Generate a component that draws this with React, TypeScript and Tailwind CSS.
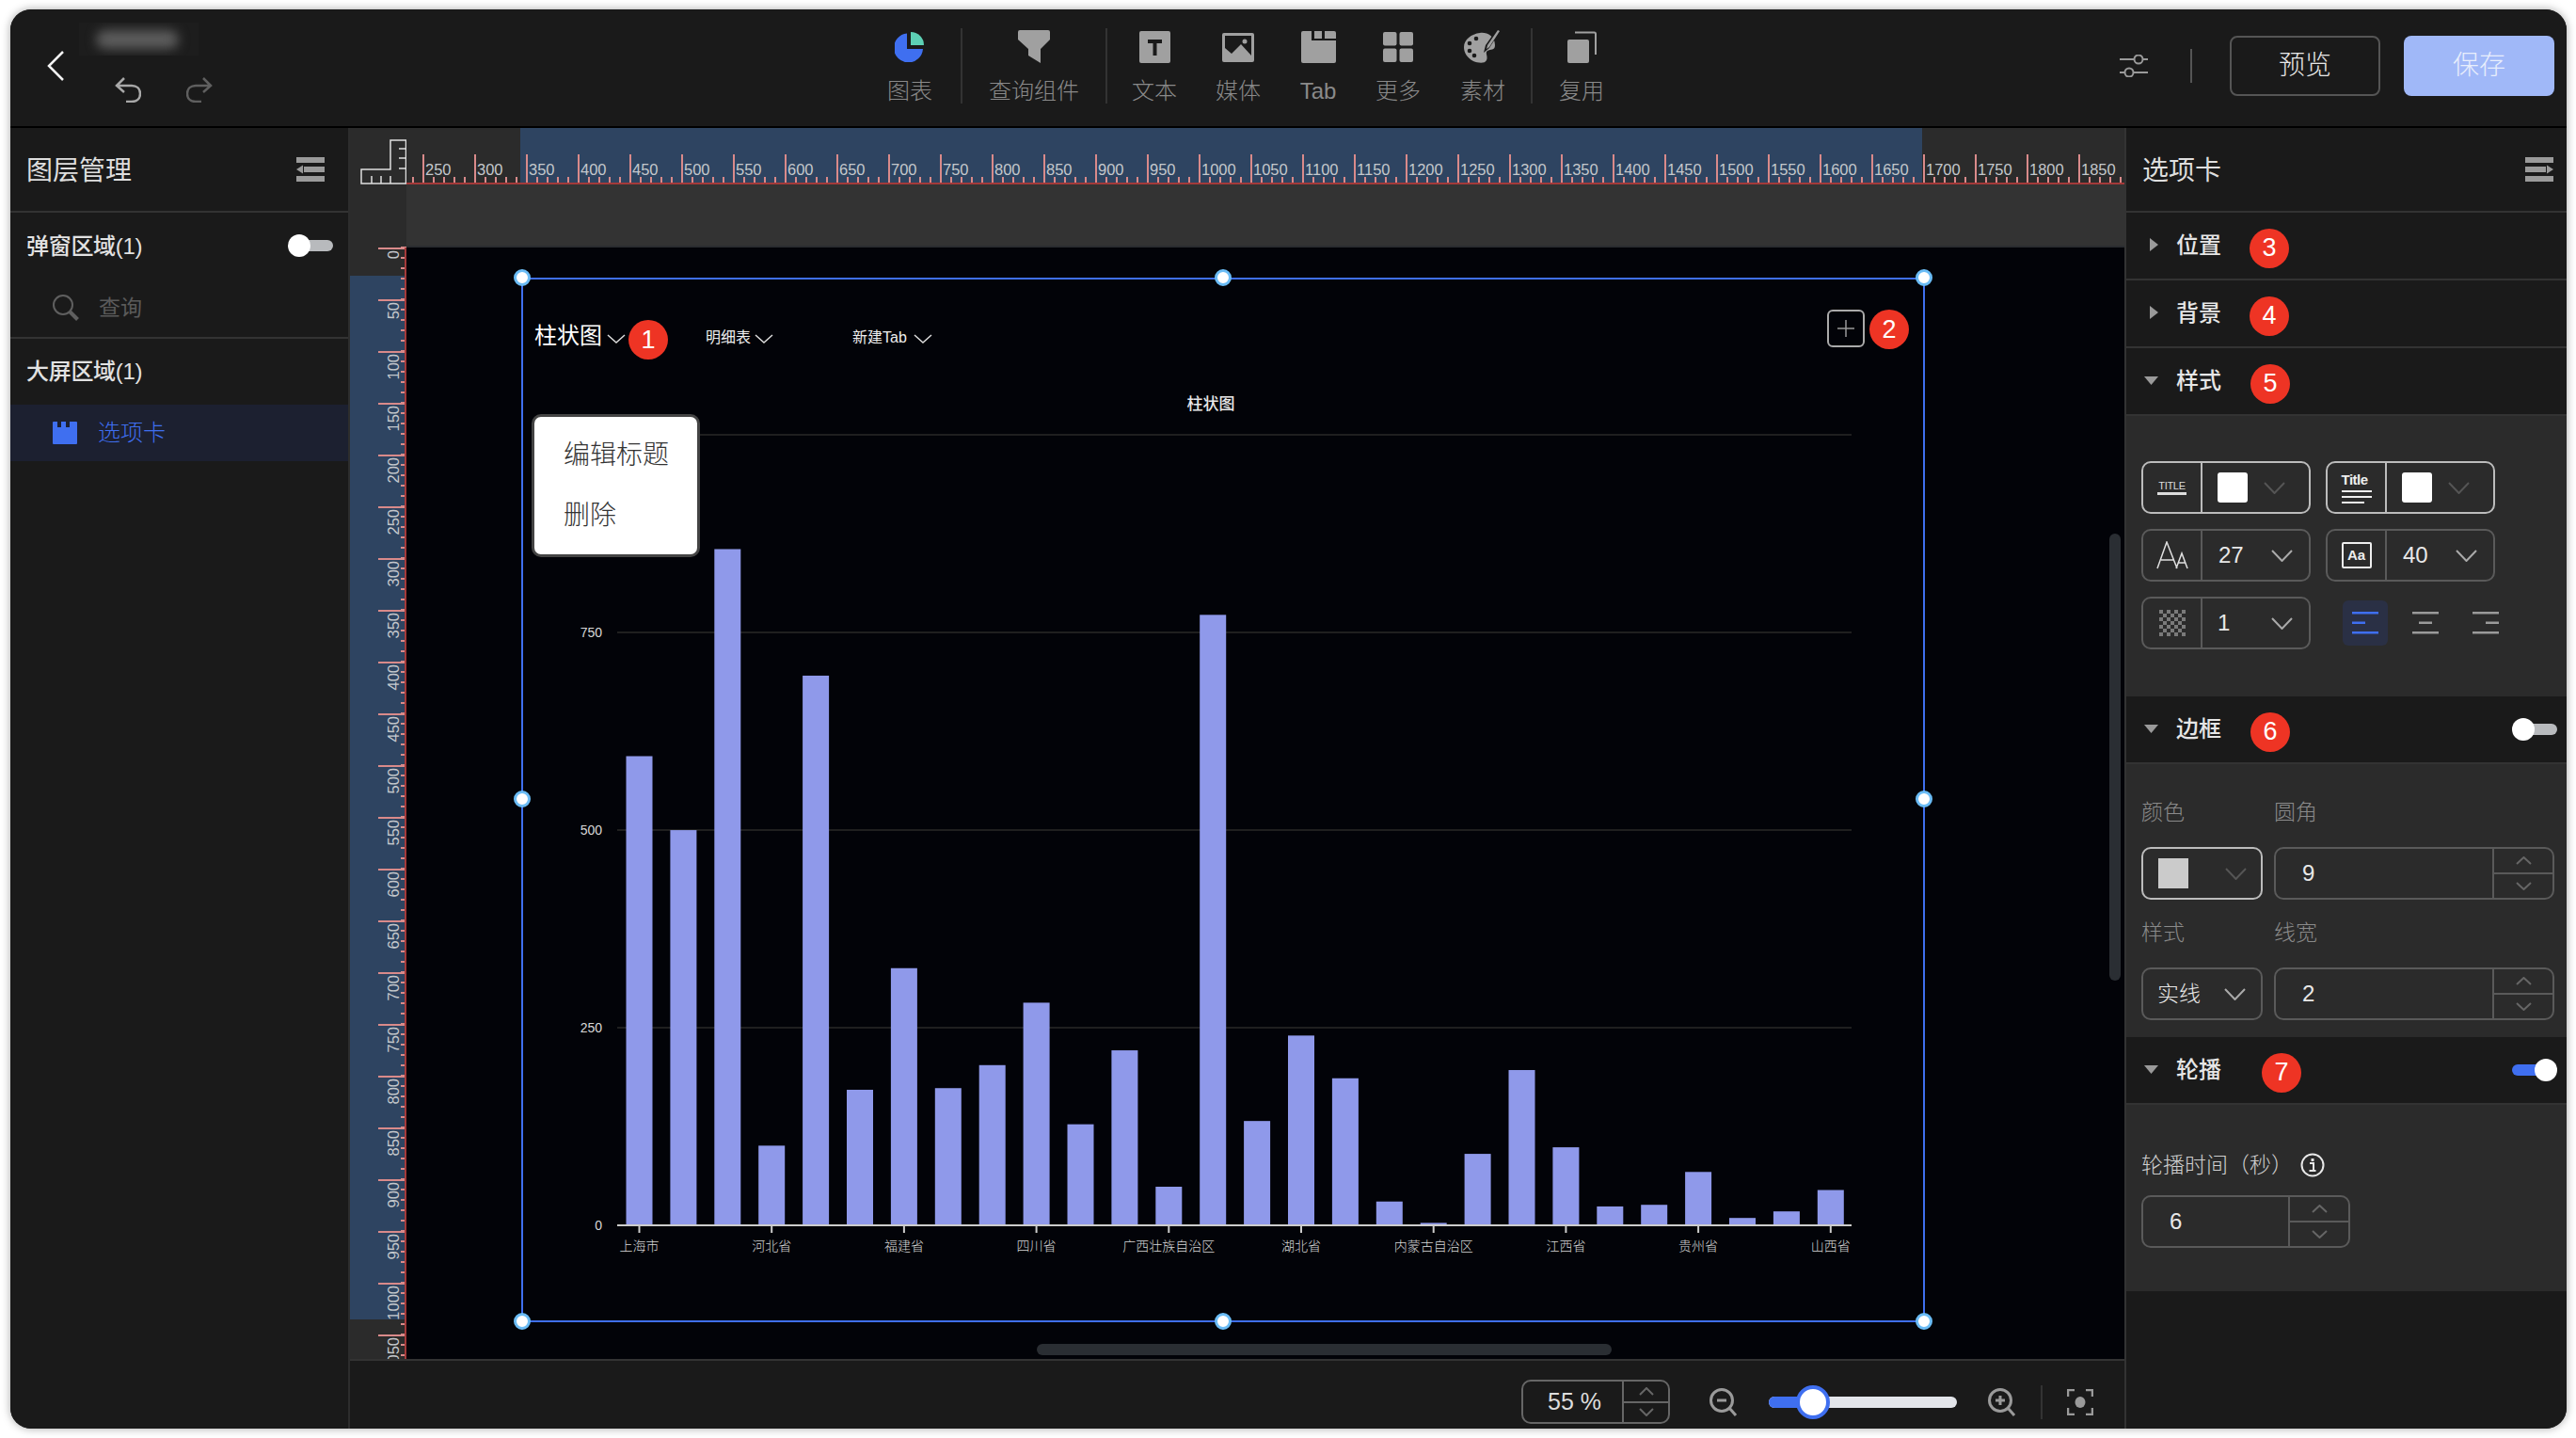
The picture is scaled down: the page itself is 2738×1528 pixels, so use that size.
import React from "react";

const FONT = "font-['Liberation_Sans','Noto_Sans_CJK_SC',sans-serif]";

function Chevron({ w = 22, h = 12, color = "#aaa", up = false, sw = 2 }: { w?: number; h?: number; color?: string; up?: boolean; sw?: number }) {
  return (
    <svg width={w} height={h} viewBox={`0 0 ${w} ${h}`} fill="none" className="block shrink-0">
      <path d={up ? `M1 ${h - 1}L${w / 2} 1L${w - 1} ${h - 1}` : `M1 1L${w / 2} ${h - 1}L${w - 1} 1`} stroke={color} strokeWidth={sw} />
    </svg>
  );
}

function Badge({ n, className = "" }: { n: number; className?: string }) {
  return (
    <div className={`w-[42px] h-[42px] rounded-full bg-[#ee3424] text-white text-[27px] font-medium flex items-center justify-center shrink-0 ${className}`}>{n}</div>
  );
}

function Toggle({ on = false }: { on?: boolean }) {
  return (
    <div className="relative w-[48px] h-[24px] shrink-0">
      <div className={`absolute top-[6px] h-[12px] w-[36px] rounded-full ${on ? "left-0 bg-[#3f6ff0]" : "right-0 bg-[#b8babd]"}`} />
      <div className={`absolute top-0 w-[24px] h-[24px] rounded-full bg-white ${on ? "right-0" : "left-0"}`} />
    </div>
  );
}

function PanelIcon({ flip = false }: { flip?: boolean }) {
  return (
    <svg width="30" height="26" viewBox="0 0 30 26" className={`block shrink-0 ${flip ? "-scale-x-100" : ""}`} fill="#9a9a9a">
      <rect x="0" y="0" width="30" height="6" />
      <rect x="8" y="10" width="22" height="6" />
      <path d="M0 13L7 8.500V17.500Z" />
      <rect x="0" y="20" width="30" height="6" />
    </svg>
  );
}

function Tool({ label, w, children }: { label: string; w: string; children: React.ReactNode }) {
  return (
    <div className={`flex flex-col items-center ${w}`}>
      <div className="h-[36px] flex items-center justify-center pt-[4px]">{children}</div>
      <div className="mt-[17px] text-[24px] leading-[28px] font-light text-[#8a8a8a]">{label}</div>
    </div>
  );
}

function Sep() {
  return <div className="w-[2px] h-[80px] bg-[#333] shrink-0" />;
}

function TopBar() {
  return (
    <div className="h-[124px] shrink-0 flex items-start bg-[#1a1a1a]">
      <div className="w-[902px] shrink-0 flex items-start">
        <div className="pl-[39px] pt-[44px]">
          <svg width="18" height="32" viewBox="0 0 18 32" fill="none" className="block">
            <path d="M17 1L2 16L17 31" stroke="#f2f2f2" strokeWidth="2.500" />
          </svg>
        </div>
        <div className="ml-[16px] pt-[14px]">
          <div className="relative w-[127px] h-[35px] overflow-hidden bg-[#1d1d1d]">
            <div className="absolute left-[18px] top-[8px] w-[88px] h-[20px] rounded-full bg-[#5c5c5c] blur-[6px]" />
          </div>
          <div className="flex pl-[38px] mt-[23px] gap-[48px]">
            <svg width="28" height="27" viewBox="0 0 28 27" fill="none" className="block">
              <path d="M10 1L2 9L10 16M2 9H18C23 9 27 12 27 17.500C27 23 23 26 18 26H12" stroke="#a8a8a8" strokeWidth="2.500" />
            </svg>
            <svg width="28" height="27" viewBox="0 0 28 27" fill="none" className="block">
              <path d="M18 1L26 9L18 16M26 9H10C5 9 1 12 1 17.500C1 23 5 26 10 26H16" stroke="#5f5f5f" strokeWidth="2.500" />
            </svg>
          </div>
        </div>
      </div>
      <div className="flex items-start pt-[20px]">
        <Tool label="图表" w="w-[108px]">
          <svg width="32" height="32" viewBox="0 0 32 32" className="block">
            <path d="M13 1.500V18H30A15.500 15.500 0 1 1 13 1.500Z" fill="#3f6ff0" />
            <path d="M17 0A14 14 0 0 1 31 14H17Z" fill="#5dd0b5" />
          </svg>
        </Tool>
        <Sep />
        <Tool label="查询组件" w="w-[152px]">
          <svg width="34" height="36" viewBox="0 0 34 36" className="block">
            <path d="M2 0H32Q34 0 34 2V10L24 20V35L11 27V20L0 10V2Q0 0 2 0Z" fill="#a0a0a0" />
          </svg>
        </Tool>
        <Sep />
        <Tool label="文本" w="w-[100px]">
          <svg width="33" height="34" viewBox="0 0 33 34" className="block">
            <rect width="33" height="34" rx="2" fill="#a0a0a0" />
            <path d="M9 9H24V13H18.500V26H14.500V13H9Z" fill="#1a1a1a" />
          </svg>
        </Tool>
        <Tool label="媒体" w="w-[78px]">
          <svg width="34" height="31" viewBox="0 0 34 31" className="block">
            <rect width="34" height="31" rx="2" fill="#a0a0a0" />
            <rect x="3" y="3" width="28" height="25" fill="#1a1a1a" />
            <path d="M3 28V16L10 22L20 12L31 24V28Z" fill="#a0a0a0" />
            <circle cx="24" cy="9" r="2.500" fill="#a0a0a0" />
          </svg>
        </Tool>
        <Tool label="Tab" w="w-[92px]">
          <svg width="37" height="34" viewBox="0 0 37 34" className="block">
            <path d="M2 0H35Q37 0 37 2V32Q37 34 35 34H2Q0 34 0 32V2Q0 0 2 0Z" fill="#a0a0a0" />
            <rect x="11" y="0" width="3" height="10" fill="#1a1a1a" />
            <rect x="22" y="0" width="3" height="10" fill="#1a1a1a" />
            <rect x="14" y="8" width="8" height="2" fill="#1a1a1a" />
            <rect x="25" y="8" width="12" height="2" fill="#1a1a1a" />
          </svg>
        </Tool>
        <Tool label="更多" w="w-[78px]">
          <svg width="32" height="32" viewBox="0 0 32 32" fill="#a0a0a0" className="block">
            <rect width="14.500" height="14.500" rx="2" />
            <rect x="17.500" width="14.500" height="14.500" rx="2" />
            <rect y="17.500" width="14.500" height="14.500" rx="2" />
            <rect x="17.500" y="17.500" width="14.500" height="14.500" rx="2" />
          </svg>
        </Tool>
        <Tool label="素材" w="w-[102px]">
          <svg width="40" height="36" viewBox="0 0 40 36" className="block">
            <path d="M17 3C24 2 33 6 33 16C33 22 28 20 25 22C22 24 26 28 24 32C22 36 15 35 10 33C3 29 0 24 0 18C0 10 8 4 17 3Z" fill="#a0a0a0" />
            <circle cx="13" cy="9" r="2.300" fill="#1a1a1a" />
            <circle cx="6" cy="14" r="2.300" fill="#1a1a1a" />
            <circle cx="6" cy="22" r="2.300" fill="#1a1a1a" />
            <circle cx="11" cy="27" r="2.300" fill="#1a1a1a" />
            <path d="M39 0L27 19L21 24L23 16L35 -1Z" fill="#1a1a1a" />
            <path d="M38 1L27 18L24 20L25 16L36 0Z" fill="#a0a0a0" />
          </svg>
        </Tool>
        <Sep />
        <Tool label="复用" w="w-[104px]">
          <svg width="31" height="34" viewBox="0 0 31 34" className="block">
            <rect x="0" y="9" width="23" height="25" rx="2" fill="#a0a0a0" />
            <path d="M8 1.500H28.500Q30 1.500 30 3V25" fill="none" stroke="#a0a0a0" strokeWidth="2" />
          </svg>
        </Tool>
      </div>
      <div className="ml-auto flex items-center pt-[28px] pr-[13px]">
        <svg width="30" height="24" viewBox="0 0 30 24" fill="none" stroke="#9a9a9a" strokeWidth="2" className="block">
          <path d="M0 5H15M25 5H30M0 19H5M15 19H30" />
          <circle cx="20" cy="5" r="4.500" />
          <circle cx="10" cy="19" r="4.500" />
        </svg>
        <div className="ml-[45px] w-[2px] h-[36px] bg-[#555]" />
        <div className="ml-[40px] w-[160px] h-[64px] rounded-[8px] border-2 border-[#555] flex items-center justify-center text-[28px] text-[#e8e8e8] font-light">预览</div>
        <div className="ml-[25px] w-[160px] h-[64px] rounded-[8px] bg-[#a0b8f8] flex items-center justify-center text-[28px] text-[#e8eefc] font-light">保存</div>
      </div>
    </div>
  );
}

function LeftPanel() {
  return (
    <div className="w-[361px] shrink-0 border-r-2 border-[#2d2d2d] bg-[#1a1a1a] flex flex-col">
      <div className="h-[90px] border-b-2 border-[#333] flex items-center pl-[17px] pr-[25px] justify-between">
        <span className="text-[28px] text-[#dedede] pt-[3px]">图层管理</span>
        <PanelIcon />
      </div>
      <div className="h-[70px] flex items-center pl-[17px] pr-[16px] justify-between">
        <span className="text-[24px] text-[#e2e2e2] font-medium tracking-[-0.3px] pt-[1px]">弹窗区域(1)</span>
        <Toggle />
      </div>
      <div className="h-[64px] border-b-2 border-[#333] flex items-center pl-[45px]">
        <svg width="28" height="28" viewBox="0 0 28 28" fill="none" className="block">
          <circle cx="11" cy="11" r="10" stroke="#5f5f5f" strokeWidth="2" />
          <path d="M18 18L26.500 26.500" stroke="#5f5f5f" strokeWidth="4" />
        </svg>
        <span className="ml-[21px] text-[23px] text-[#5a5a5a] pt-[1px]">查询</span>
      </div>
      <div className="h-[70px] flex items-center pl-[17px]">
        <span className="text-[24px] text-[#e2e2e2] font-medium tracking-[-0.3px]">大屏区域(1)</span>
      </div>
      <div className="h-[60px] bg-[#1c2030] flex items-center pl-[45px]">
        <svg width="26" height="24" viewBox="0 0 26 24" className="block">
          <path d="M0 1Q0 0 1 0H5V6H9V0H14V6H18V0H25Q26 0 26 1V23Q26 24 25 24H1Q0 24 0 23Z" fill="#3f6ff0" />
        </svg>
        <span className="ml-[22px] text-[24px] text-[#3f6ff0] font-light">选项卡</span>
      </div>
    </div>
  );
}

const H_MAJOR = Array.from({ length: 33 }, (_, i) => ({ x: 18 + i * 55, v: 250 + i * 50 }));
const H_MINOR = Array.from({ length: 166 }, (_, i) => 7 + i * 11);
const V_MAJOR = Array.from({ length: 23 }, (_, i) => ({ y: 67 + i * 55, v: i * 50 }));
const V_MINOR = Array.from({ length: 108 }, (_, i) => 67 + i * 11);

function TopRuler() {
  return (
    <svg width="1826" height="60" viewBox="0 0 1826 60" className="block">
      <rect width="1826" height="60" fill="#2b2b2b" />
      <rect x="121" width="1490" height="60" fill="#2e4461" />
      {H_MINOR.map((x) => (
        <rect key={x} x={x - 1} y="52" width="2" height="6" fill="#d98a8a" />
      ))}
      {H_MAJOR.map((t) => (
        <g key={t.v}>
          <rect x={t.x - 1} y="28" width="2" height="30" fill="#d98a8a" />
          <text x={t.x + 2} y="50" fontSize="16.500" fontWeight="300" fill="#c4c8cc">{t.v}</text>
        </g>
      ))}
      <rect y="58" width="1826" height="2" fill="#a33a3a" />
    </svg>
  );
}

function LeftRuler() {
  return (
    <svg width="60" height="1248" viewBox="0 0 60 1248" className="block shrink-0">
      <rect width="60" height="1248" fill="#2b2b2b" />
      <rect y="97" width="58" height="1109" fill="#2e4461" />
      {V_MINOR.map((y) => (
        <rect key={y} x="54" y={y - 1} width="6" height="2" fill="#d98a8a" />
      ))}
      {V_MAJOR.map((t) => (
        <g key={t.v}>
          <rect x="30" y={t.y} width="30" height="2" fill="#d98a8a" />
          <text x="52" y={t.y + 3} fontSize="16.500" fontWeight="300" fill="#c4c8cc" textAnchor="end" transform={`rotate(-90 52 ${t.y + 3})`}>{t.v}</text>
        </g>
      ))}
      <rect x="58" y="67" width="2" height="1181" fill="#a33a3a" />
    </svg>
  );
}

const TOPS = [461, 506, 335, 698, 412, 664, 590, 663, 649, 611, 685, 640, 723, 375, 683, 631, 657, 732, 745, 703, 652, 699, 735, 734, 714, 742, 738, 725];
const LABELS = [
  [0, "上海市"], [3, "河北省"], [6, "福建省"], [9, "四川省"], [12, "广西壮族自治区"],
  [15, "湖北省"], [18, "内蒙古自治区"], [21, "江西省"], [24, "贵州省"], [27, "山西省"],
] as const;

function Chart() {
  const axis = 916;
  return (
    <svg width="1488" height="1018" viewBox="0 0 1488 1018" className="block">
      <text x="731" y="50" textAnchor="middle" fontSize="17" fontWeight="500" fill="#e8e8e8">柱状图</text>
      {[76, 286, 496, 706].map((y) => (
        <rect key={y} x="100" y={y} width="1312" height="2" fill="#1f1f1f" />
      ))}
      {[["750", 292], ["500", 502], ["250", 712], ["0", 922]].map(([t, y]) => (
        <text key={t} x="84" y={y} textAnchor="end" fontSize="14" fill="#d8d8d8">{t}</text>
      ))}
      {TOPS.map((t, i) => {
        const top = t * 1.7462 - 386.5;
        return <rect key={i} x={109.500 + i * 46.9} y={top} width="28" height={Math.max(axis - top, 0)} fill="#8f99ea" />;
      })}
      <rect x="100" y={axis} width="1312" height="2" fill="#cccccc" />
      {LABELS.map(([i, s]) => (
        <g key={i}>
          <rect x={122.500 + i * 46.9} y={axis + 2} width="2" height="7" fill="#cccccc" />
          <text x={123.500 + i * 46.9} y={axis + 28} textAnchor="middle" fontSize="14" fontWeight="300" fill="#d8d8d8">{s}</text>
        </g>
      ))}
    </svg>
  );
}

function Handle({ className }: { className: string }) {
  return <div className={`absolute w-[18px] h-[18px] rounded-full bg-white border-[3px] border-[#6bbcf5] ${className}`} />;
}

function Widget() {
  return (
    <div className="absolute left-[122px] top-[99px] w-[1492px] h-[1110px] border-2 border-[#3f6fee]">
      <div className="flex items-center pl-[12px] pt-[32px] h-[88px] text-white">
        <span className="text-[24px]">柱状图</span>
        <div className="ml-[5px] mt-[6px]"><Chevron w={20} h={10} color="#ddd" sw={1.5} /></div>
        <span className="ml-[85px] text-[16px] text-[#eee] mt-[4px]">明细表</span>
        <div className="ml-[4px] mt-[6px]"><Chevron w={20} h={10} color="#ddd" sw={1.5} /></div>
        <span className="ml-[84px] text-[16px] text-[#eee] mt-[4px]">新建Tab</span>
        <div className="ml-[7px] mt-[6px]"><Chevron w={20} h={10} color="#ddd" sw={1.5} /></div>
        <div className="ml-auto mr-[62px] self-start w-[40px] h-[40px] rounded-[6px] border-2 border-[#aaa] flex items-center justify-center">
          <svg width="18" height="18" viewBox="0 0 18 18" className="block"><path d="M9 0V18M0 9H18" stroke="#999" strokeWidth="1.500" /></svg>
        </div>
      </div>
      <Chart />
      <Badge n={1} className="absolute left-[112px] top-[43px]" />
      <Badge n={2} className="absolute left-[1431px] top-[32px]" />
      <div className="absolute left-[9px] top-[143px] w-[179px] h-[152px] rounded-[10px] bg-white border-[3px] border-[#444] flex flex-col justify-center gap-[24px] pl-[31px] text-[28px] leading-[40px] text-[#333] font-light">
        <span>编辑标题</span>
        <span>删除</span>
      </div>
      <Handle className="left-[-10px] top-[-11px]" />
      <Handle className="left-[735px] top-[-11px]" />
      <Handle className="left-[1480px] top-[-11px]" />
      <Handle className="left-[-10px] top-[543px]" />
      <Handle className="left-[1480px] top-[543px]" />
      <Handle className="left-[-10px] top-[1098px]" />
      <Handle className="left-[735px] top-[1098px]" />
      <Handle className="left-[1480px] top-[1098px]" />
    </div>
  );
}

function BottomBar() {
  return (
    <div className="h-[74px] shrink-0 border-t-2 border-[#333] bg-[#1a1a1a] flex items-center pl-[1245px] pt-[15px] text-[#ddd]">
      <div className="w-[158px] h-[47px] rounded-[10px] border-2 border-[#666] flex">
        <div className="flex-1 flex items-center justify-center pl-[4px] text-[25px] font-light">55 %</div>
        <div className="w-[49px] border-l-2 border-[#666] flex flex-col">
          <div className="flex-1 border-b-2 border-[#666] flex items-center justify-center"><Chevron w={16} h={9} color="#666" up /></div>
          <div className="flex-1 flex items-center justify-center"><Chevron w={16} h={9} color="#666" /></div>
        </div>
      </div>
      <svg width="30" height="30" viewBox="0 0 30 30" fill="none" className="block ml-[42px]">
        <circle cx="13" cy="13" r="11.500" stroke="#9a9a9a" strokeWidth="3" />
        <path d="M8 13H18" stroke="#9a9a9a" strokeWidth="3" />
        <path d="M21 21L28 29" stroke="#9a9a9a" strokeWidth="3" />
      </svg>
      <div className="ml-[33px] relative w-[200px] h-[12px] rounded-full bg-[#e3e5ea]">
        <div className="absolute left-0 top-0 h-[12px] w-[46px] rounded-l-full bg-[#3f6ff0]" />
        <div className="absolute left-[29px] top-[-12px] w-[36px] h-[36px] rounded-full bg-white border-[4px] border-[#3f6ff0]" />
      </div>
      <svg width="30" height="30" viewBox="0 0 30 30" fill="none" className="block ml-[33px]">
        <circle cx="13" cy="13" r="11.500" stroke="#9a9a9a" strokeWidth="3" />
        <path d="M8 13H18M13 8V18" stroke="#9a9a9a" strokeWidth="3" />
        <path d="M21 21L28 29" stroke="#9a9a9a" strokeWidth="3" />
      </svg>
      <div className="ml-[26px] w-[2px] h-[36px] bg-[#333]" />
      <svg width="28" height="28" viewBox="0 0 28 28" fill="none" className="block ml-[26px]">
        <path d="M1 8V1H8M20 1H27V8M27 20V27H20M8 27H1V20" stroke="#9a9a9a" strokeWidth="2.500" />
        <ellipse cx="14" cy="14" rx="5.500" ry="6" fill="#9a9a9a" />
      </svg>
    </div>
  );
}

function Center() {
  return (
    <div className="w-[1886px] shrink-0 flex flex-col bg-[#1a1a1a]">
      <div className="h-[60px] shrink-0 flex bg-[#2b2b2b]">
        <svg width="60" height="60" viewBox="0 0 60 60" fill="none" className="block shrink-0">
          <path d="M12 44H43V13H59.500V59H12ZM52 22H60M52 32H60M52 43H60M23 51V59M33 51V59M43 51V59" stroke="#e0e0e0" strokeWidth="1.500" />
        </svg>
        <TopRuler />
      </div>
      <div className="flex h-[1248px] shrink-0">
        <LeftRuler />
        <div className="relative flex-1 flex flex-col overflow-hidden bg-[#020308]">
          <div className="h-[67px] shrink-0 bg-[#333] border-b-2 border-[#2a2c30]" />
          <Widget />
          <div className="absolute left-[1810px] top-[371px] w-[12px] h-[475px] rounded-full bg-[#2a2e33]" />
          <div className="absolute left-[670px] top-[1232px] w-[611px] h-[12px] rounded-full bg-[#2a2e33]" />
        </div>
      </div>
      <BottomBar />
    </div>
  );
}

function Tri({ down = false }: { down?: boolean }) {
  return (
    <div className="w-[53px] shrink-0 flex items-center pl-[19px]">
      <svg width="16" height="16" viewBox="0 0 16 16" className="block">
        {down ? <path d="M0 4H15L7.500 13Z" fill="#9a9a9a" /> : <path d="M6 1L15 8L6 15Z" fill="#9a9a9a" />}
      </svg>
    </div>
  );
}

function SectionHead({ title, down, n, ml, toggle }: { title: string; down?: boolean; n: number; ml: string; toggle?: React.ReactNode }) {
  return (
    <div className="h-[72px] shrink-0 border-b-2 border-[#333] bg-[#1a1a1a] flex items-center pr-[10px]">
      <div className="mt-[-2px]"><Tri down={down} /></div>
      <span className="text-[24px] text-[#e6e6e6] font-medium mt-[-1px]">{title}</span>
      <Badge n={n} className={ml} />
      {toggle ? <div className="ml-auto">{toggle}</div> : null}
    </div>
  );
}

function Field({ bright = false, icon, children }: { bright?: boolean; icon: React.ReactNode; children: React.ReactNode }) {
  const b = bright ? "border-[#bcbcbc]" : "border-[#5a5a5a]";
  return (
    <div className={`w-[180px] h-[56px] rounded-[10px] border-2 ${b} flex shrink-0`}>
      <div className={`w-[63px] shrink-0 border-r-2 ${b} flex items-center justify-center`}>{icon}</div>
      <div className="flex-1 flex items-center">{children}</div>
    </div>
  );
}

function Swatch() {
  return <div className="ml-[16px] w-[32px] h-[32px] rounded-[3px] bg-white" />;
}

function Num({ v, wide }: { v: string; wide: string }) {
  return (
    <div className={`${wide} h-[56px] rounded-[10px] border-2 border-[#5a5a5a] flex shrink-0`}>
      <div className="flex-1 pl-[28px] flex items-center text-[24px] font-light text-[#e8e8e8]">{v}</div>
      <div className="w-[64px] border-l-2 border-[#5a5a5a] flex flex-col">
        <div className="flex-1 border-b-2 border-[#5a5a5a] flex items-center justify-center"><Chevron w={17} h={9} color="#666" up /></div>
        <div className="flex-1 flex items-center justify-center"><Chevron w={17} h={9} color="#666" /></div>
      </div>
    </div>
  );
}

function AlignIcon({ kind }: { kind: "l" | "c" | "r" }) {
  const c = kind === "l" ? "#3f6ff0" : "#9a9a9a";
  const mid = kind === "l" ? 0 : kind === "c" ? 7 : 14;
  return (
    <svg width="28" height="24" viewBox="0 0 28 24" className="block">
      <rect y="0" width="28" height="2.500" fill={c} />
      <rect x={mid} y="10.500" width="14" height="2.500" fill={c} />
      <rect y="21" width="28" height="2.500" fill={c} />
    </svg>
  );
}

function RightPanel() {
  return (
    <div className="flex-1 border-l-2 border-[#333] bg-[#1a1a1a] flex flex-col">
      <div className="h-[90px] shrink-0 border-b-2 border-[#333] flex items-center pl-[17px] pr-[14px] justify-between">
        <span className="text-[28px] text-[#dedede] pt-[3px]">选项卡</span>
        <PanelIcon flip />
      </div>
      <SectionHead title="位置" n={3} ml="ml-[30px] mt-[5px]" />
      <SectionHead title="背景" n={4} ml="ml-[30px] mt-[5px]" />
      <SectionHead title="样式" down n={5} ml="ml-[31px] mt-[5px]" />
      <div className="h-[298px] shrink-0 bg-[#2b2b2b] pl-[16px] pt-[48px] flex flex-col gap-[16px]">
        <div className="flex gap-[16px]">
          <Field bright icon={
            <div className="flex flex-col items-center">
              <span className="text-[11px] leading-[12px] font-medium text-[#ddd] tracking-[-0.3px]">TITLE</span>
              <div className="w-[31px] h-[3px] bg-[#ddd] mt-[1px]" />
            </div>
          }>
            <Swatch />
            <div className="ml-[17px]"><Chevron w={23} h={13} color="#555" /></div>
          </Field>
          <Field bright icon={
            <div className="flex flex-col items-start">
              <span className="text-[15px] leading-[16px] font-bold text-[#eee] tracking-[-0.5px]">Title</span>
              <div className="w-[32px] h-[2px] bg-[#eee] mt-[3px]" />
              <div className="w-[32px] h-[2px] bg-[#eee] mt-[4px]" />
              <div className="w-[24px] h-[2px] bg-[#eee] mt-[4px]" />
            </div>
          }>
            <Swatch />
            <div className="ml-[17px]"><Chevron w={23} h={13} color="#555" /></div>
          </Field>
        </div>
        <div className="flex gap-[16px]">
          <Field icon={
            <svg width="34" height="30" viewBox="0 0 34 30" fill="none" stroke="#e0e0e0" strokeWidth="1.500" className="block">
              <path d="M1 29L11 1L22 29M5 20H18M21 29L27 13L33 29M23 23H31" />
            </svg>
          }>
            <span className="ml-[17px] text-[24px] font-light text-[#e8e8e8]">27</span>
            <div className="ml-auto mr-[17px]"><Chevron w={23} h={13} color="#aaa" /></div>
          </Field>
          <Field icon={
            <div className="w-[32px] h-[28px] border-[2.5px] border-[#eee] rounded-[2px] flex items-center justify-center text-[15px] font-bold text-[#eee]">Aa</div>
          }>
            <span className="ml-[17px] text-[24px] font-light text-[#e8e8e8]">40</span>
            <div className="ml-auto mr-[17px]"><Chevron w={23} h={13} color="#aaa" /></div>
          </Field>
        </div>
        <div className="flex">
          <Field icon={
            <svg width="28" height="28" viewBox="0 0 28 28" fill="#7a7a7a" className="block">
              {[0, 1, 2, 3, 4, 5, 6].flatMap((r) => [0, 1, 2, 3, 4, 5, 6].filter((c) => (r + c) % 2 === 0).map((c) => (
                <rect key={`${r}-${c}`} x={c * 4} y={r * 4} width="4" height="4" />
              )))}
            </svg>
          }>
            <span className="ml-[16px] text-[24px] font-light text-[#e8e8e8]">1</span>
            <div className="ml-auto mr-[17px]"><Chevron w={23} h={13} color="#aaa" /></div>
          </Field>
          <div className="ml-[26px] flex items-center">
            <div className="w-[64px] flex justify-center"><div className="w-[48px] h-[48px] rounded-[6px] bg-[#2a3045] flex items-center justify-center"><AlignIcon kind="l" /></div></div>
            <div className="w-[64px] flex justify-center"><AlignIcon kind="c" /></div>
            <div className="w-[64px] flex justify-center"><AlignIcon kind="r" /></div>
          </div>
        </div>
      </div>
      <SectionHead title="边框" down n={6} ml="ml-[31px] mt-[5px]" toggle={<Toggle />} />
      <div className="h-[290px] shrink-0 bg-[#2b2b2b] pl-[16px] pt-[36px] flex flex-col">
        <div className="flex h-[30px] items-center text-[23px] font-light text-[#8a8a8a]">
          <span className="w-[141px]">颜色</span><span>圆角</span>
        </div>
        <div className="flex mt-[22px] gap-[12px]">
          <div className="w-[129px] h-[56px] rounded-[10px] border-2 border-[#bcbcbc] flex items-center pl-[16px]">
            <div className="w-[32px] h-[32px] bg-[#cbcbcb]" />
            <div className="ml-auto mr-[15px]"><Chevron w={23} h={13} color="#555" /></div>
          </div>
          <Num v="9" wide="w-[298px]" />
        </div>
        <div className="flex h-[30px] mt-[20px] items-center text-[23px] font-light text-[#8a8a8a]">
          <span className="w-[141px]">样式</span><span>线宽</span>
        </div>
        <div className="flex mt-[22px] gap-[12px]">
          <div className="w-[129px] h-[56px] rounded-[10px] border-2 border-[#5a5a5a] flex items-center pl-[15px]">
            <span className="text-[23px] text-[#e8e8e8] font-light">实线</span>
            <div className="ml-auto mr-[16px]"><Chevron w={23} h={13} color="#aaa" /></div>
          </div>
          <Num v="2" wide="w-[298px]" />
        </div>
      </div>
      <SectionHead title="轮播" down n={7} ml="ml-[43px] mt-[5px]" toggle={<Toggle on />} />
      <div className="h-[198px] shrink-0 bg-[#2b2b2b] pl-[16px] pt-[49px] flex flex-col">
        <div className="flex h-[30px] items-center text-[23px] font-light text-[#cfcfcf]">
          <span>轮播时间（秒）</span>
          <svg width="26" height="26" viewBox="0 0 26 26" fill="none" className="block ml-[8px]">
            <circle cx="13" cy="13" r="11.500" stroke="#e8e8e8" strokeWidth="2" />
            <rect x="11.500" y="6" width="3" height="3" fill="#e8e8e8" />
            <path d="M10 11H14V18M9.500 19H16.500" stroke="#e8e8e8" strokeWidth="2" />
          </svg>
        </div>
        <div className="mt-[17px]">
          <Num v="6" wide="w-[222px]" />
        </div>
      </div>
    </div>
  );
}

export default function App() {
  return (
    <div className={`w-[2738px] h-[1528px] overflow-hidden bg-white pl-[11px] pt-[10px] ${FONT}`}>
      <div className="w-[2717px] h-[1508px] rounded-[22px] overflow-hidden bg-[#1a1a1a] flex flex-col shadow-[0_0_10px_rgba(0,0,0,0.35)]">
        <TopBar />
        <div className="h-[2px] bg-black shrink-0" />
        <div className="flex flex-1 min-h-0">
          <LeftPanel />
          <Center />
          <RightPanel />
        </div>
      </div>
    </div>
  );
}
